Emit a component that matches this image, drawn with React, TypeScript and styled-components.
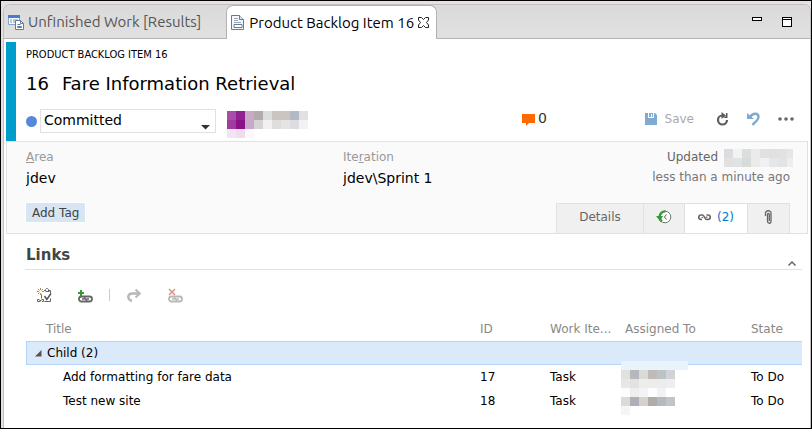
import React from 'react';
import styled, { createGlobalStyle } from 'styled-components';

const GlobalStyle = createGlobalStyle`
  *, *::before, *::after { box-sizing: border-box; }
  body { margin: 0; background: #fff; }
  body, button, input, select {
    font-family: "DejaVu Sans", sans-serif;
    font-size: 12px;
    line-height: 16px;
  }
  button, input, select { margin: 0; padding: 0; border: 0; background: none; color: inherit; }
  h1, h2, p { margin: 0; }
  svg { display: block; flex: none; }
`;

const Frame = styled.div`
  min-height: 100vh;
  border: 1px solid #000;
  background: #e6e0e1;
  padding: 3px 0 0 2px;
  display: flex;
`;

const Editor = styled.div`
  flex: 1;
  min-width: 0;
  background: #fff;
  border: 1px solid #c3bfc0;
  border-bottom: 0;
  border-radius: 7px 7px 0 0;
`;

const TabStrip = styled.div`
  display: flex;
  height: 34px;
  border-radius: 6px 6px 0 0;
  background: linear-gradient(#dadada, #e1e1e1);
  box-shadow: inset 0 -1px #b2b2b2;
`;

const EditorTab = styled.button<{ $active?: boolean }>`
  display: flex;
  align-items: center;
  gap: 4px;
  padding: 0 ${p => (p.$active ? 7 : 25)}px 0 4px;
  font-family: Ubuntu, "Noto Sans", sans-serif;
  font-size: 15px;
  white-space: nowrap;
  color: ${p => (p.$active ? '#000' : '#555')};
  background: ${p => (p.$active ? '#fff' : 'transparent')};
  border: ${p => (p.$active ? '1px solid #b2b2b2' : '0')};
  border-bottom: 0;
  border-radius: 7px 7px 0 0;
`;

const WindowButtons = styled.div`
  display: flex;
  align-items: flex-start;
  gap: 20px;
  margin-left: auto;
  padding: 12px 18px 0 0;
`;

const IconButton = styled.button`
  display: flex;
  align-items: center;
  justify-content: center;
`;

const Form = styled.main`
  padding: 3px 2px 0;
`;

const Header = styled.header`
  border-left: 10px solid #009ccc;
  padding: 5px 14px 8px 10px;
`;

const ItemType = styled.p`
  font-family: "DejaVu Sans Condensed", "DejaVu Sans", sans-serif;
  font-size: 11px;
  color: #000;
`;

const ItemTitle = styled.h1`
  display: flex;
  gap: 13px;
  margin: 9px 0 13px;
  font-family: "DejaVu Sans", sans-serif;
  font-size: 18px;
  font-weight: 400;
  line-height: 24px;
`;

const StatusRow = styled.div`
  display: grid;
  grid-template-columns: 201px 295px 1fr auto;
  align-items: center;
  height: 24px;
`;

const StateField = styled.label`
  display: flex;
  align-items: center;
  gap: 3px;
  margin-right: 11px;
  position: relative;
`;

const StateSelect = styled.select`
  appearance: none;
  flex: 1;
  height: 24px;
  padding: 0 3px 3px;
  border: 1px solid #e1e1e1;
  background: #fff;
  font-size: 14px;
`;

const SelectArrow = styled.svg`
  position: absolute;
  right: 6px;
  bottom: 3px;
  pointer-events: none;
`;

const Assignee = styled.div`
  height: 24px;
  padding-top: 2px;
`;

const CommentsButton = styled.button`
  display: flex;
  align-items: center;
  gap: 3px;
  margin-bottom: 6px;
  font-size: 14px;
  color: #333;
`;

const Actions = styled.div`
  display: flex;
  align-items: center;
  gap: 18px;
  margin-bottom: 5px;
`;

const SaveButton = styled.button`
  display: flex;
  align-items: center;
  gap: 8px;
  margin-right: 4px;
  color: #aaa;
`;

const Details = styled.section`
  border: 1px solid #e1e1e1;
  background: #fafafa;
  padding: 7px 0 0 19px;
`;

const Fields = styled.div`
  display: grid;
  grid-template-columns: 317px 1fr auto;
  padding-right: 14px;
`;

const Field = styled.label`
  display: flex;
  flex-direction: column;
  gap: 4px;
  color: #999;
`;

const FieldInput = styled.input`
  width: 100%;
  color: #000;
  font-size: 14px;
  line-height: 18px;
`;

const Updated = styled.div`
  display: flex;
  flex-direction: column;
  align-items: flex-end;
  gap: 4px;
  color: #666;
  white-space: nowrap;
`;

const UpdatedBy = styled.div`
  display: flex;
  gap: 6px;
  height: 16px;
`;

const Ago = styled.span`
  padding-right: 3px;
  color: #777;
`;

const DetailsFooter = styled.div`
  display: flex;
  justify-content: space-between;
  align-items: flex-start;
  margin-top: 16px;
  padding-right: 17px;
`;

const AddTag = styled.button`
  height: 19px;
  padding: 0 6px;
  background: #d7e6f2;
  box-shadow: 0 0 0 1px #fff;
  color: #444;
`;

const FormTabs = styled.div`
  display: grid;
  grid-template-columns: 87px 41px 63px 42px;
  height: 30px;
  border-left: 1px solid #e1e1e1;
`;

const FormTab = styled.button<{ $active?: boolean }>`
  display: flex;
  align-items: center;
  justify-content: center;
  gap: 6px;
  padding-bottom: 3px;
  border-top: 1px solid #e1e1e1;
  border-right: 1px solid #e1e1e1;
  background: ${p => (p.$active ? '#fff' : '#f0f0f0')};
  color: #666;
`;

const LinkCount = styled.span`
  color: #007acc;
`;

const LinksSection = styled.section`
  padding: 10px 6px 0 19px;
`;

const SectionHead = styled.div`
  display: flex;
  justify-content: space-between;
  align-items: flex-end;
  height: 26px;
  padding: 0 6px 3px 1px;
  border-bottom: 1px solid #e1e1e1;
`;

const SectionTitle = styled.h2`
  font-size: 15px;
  line-height: 22px;
  color: #444;
`;

const Toolbar = styled.div`
  display: flex;
  align-items: center;
  height: 50px;
  gap: 26px;
  padding-left: 12px;
`;

const Separator = styled.span`
  width: 1px;
  height: 12px;
  margin: 0 -9px 0 -10px;
  background: #ccc;
`;

const LinksGrid = styled.div`
  padding-left: 1px;
`;

const LinksTable = styled.table`
  width: 100%;
  table-layout: fixed;
  border-collapse: separate;
  border-spacing: 0;
`;

const Column = styled.col<{ $width?: number }>`
  width: ${p => (p.$width ? `${p.$width}px` : 'auto')};
`;

const Th = styled.th`
  height: 21px;
  padding: 0 0 4px;
  font-weight: 400;
  text-align: left;
  color: #888;
  white-space: nowrap;
  &:first-child { padding-left: 20px; }
`;

const GroupCell = styled.td`
  height: 24px;
  padding: 0 0 0 8px;
  border: 1px solid #b4d3f8;
  border-right: 0;
  background: #dbeafb;
`;

const GroupToggle = styled.button`
  display: flex;
  align-items: center;
  gap: 5px;
`;

const Td = styled.td`
  height: 24px;
  padding: 0;
  position: relative;
  white-space: nowrap;
  &:first-child { padding-left: 37px; }
`;

const CellOverlay = styled.div<{ $top: number }>`
  position: absolute;
  left: -4px;
  top: ${p => p.$top}px;
`;

/* Obscured personal names, drawn as a coarse colour mosaic. */
function Mosaic({ rows, width }: { rows: string[][]; width: number }) {
  return (
    <svg width={width} height={rows.length * 9} shapeRendering="crispEdges" aria-hidden="true">
      {rows.map((row, y) =>
        row.map((c, x) => <rect key={`${x}-${y}`} x={x * 9} y={y * 9} width={9} height={9} fill={c} />),
      )}
    </svg>
  );
}

const assignee = [
  ['#a74fa7', '#90228f', '#c8aac5', '#b1abae', '#dbdedc', '#cac5bf', '#cac5c1', '#b4b9c6', '#e1e1e3'],
  ['#a03ca0', '#8b128a', '#c6a9c8', '#d4d4d4', '#f2f1ef', '#e1dddd', '#e4e4e5', '#dcdde3', '#f2f1f3'],
  ['#f2e5f2', '#efddef', '#fcf7fc'],
];
const updater = [
  ['#dcdce0', '#f1f2f4', '#dcdddd', '#ebebeb', '#e0e1e3', '#e3dedf', '#e0e2e4', '#e5e6e8'],
  ['#e2e0e0', '#e0e3e6', '#d9dbdb', '#ebebea', '#f1f1f1', '#e5e6e7', '#e2e4e4', '#eeeeee'],
];
const owner17 = [
  ['#eaf2fc', '#eaf2fc', '#eaf2fc', '#eaf2fc', '#eaf2fc', '#eaf2fc', '#eaf2fc', '#eaf2fc'],
  ['#e1e2de', '#b7b8be', '#dadbd6', '#c1bbb7', '#bcc3c5', '#d2d3d7'],
  ['#e6e8e7', '#e2e2e2', '#eeedeb', '#edecec', '#ebecee', '#eeeef0'],
];
const owner18 = [
  ['#fcfcfc', '#eeeeee', '#f3f3f3', '#fbfdff', '#f2f2f2'],
  ['#dadbd6', '#aeafb7', '#d3d2cf', '#b2aca7', '#b4bbc0', '#c2c4ca'],
  ['#f3f5f7'],
];

const ResultsIcon = () => (
  <svg width="16" height="16" viewBox="0 0 16 16">
    <path d="M.5 1.5h11v9H.5z" fill="#fff" stroke="#8ba3c8" />
    <path d="M0 1h12v3H0z" fill="#4a7ad0" />
    <path d="M2 6h2M5 6h5M2 8h2M5 8h3" stroke="#7390bd" />
    <path d="M7.500 6.500h5l3 3v6h-8z" fill="#fff" stroke="#637c9c" />
    <path d="M12.500 6.500v3h3M9.500 10.500h3M9.500 12.500h4v1h-4z" fill="none" stroke="#637c9c" />
  </svg>
);
const FormIcon = () => (
  <svg width="14" height="16" viewBox="0 0 14 16">
    <path d="M.5.5h8l4 4v10H.5z" fill="#f5f7fb" stroke="#667b96" />
    <path d="M8.500.5v4h4" fill="#dbe3ef" stroke="#667b96" />
    <path d="M3 3.500h4M3 5.500h4M3 7.500h7" stroke="#9ba8ba" />
    <path d="M3 9.500h8v3H3z" fill="#fff" stroke="#667b96" />
  </svg>
);
const CloseIcon = () => (
  <svg width="11" height="11" viewBox="0 0 11 11">
    <path d="M.5.5h3l2 2 2-2h3v2.500l-2 2.500 2 2.500v2.500h-3l-2-2-2 2h-3V8l2-2.500-2-2.500z" fill="#fff" stroke="#222" />
  </svg>
);
const MinimizeIcon = () => (
  <svg width="10" height="10" shapeRendering="crispEdges"><path d="M.5.5h9v3h-9z" fill="#fff" stroke="#000" /></svg>
);
const MaximizeIcon = () => (
  <svg width="10" height="10" shapeRendering="crispEdges"><path d="M.5.5h9v9h-9zM0 2.500h10" fill="#fff" stroke="#000" /></svg>
);
const CommentIcon = () => (
  <svg width="13" height="16"><path d="M0 4h13v9H7l-3 3v-3H0z" fill="#ff6a00" /></svg>
);
const SaveIcon = () => (
  <svg width="12" height="12"><path d="M0 0h3v5h6V0h1l2 2v10H0zM4 0h4v4H7V1H6v3H4z" fill="#7fabd2" /></svg>
);
const RefreshIcon = () => (
  <svg width="13" height="14" viewBox="0 0 13 14">
    <path d="M7 3.500H6.500A4.500 4.500 0 1 0 11 8" fill="none" stroke="#5c5c5c" strokeWidth="2.200" />
    <path d="M5.500 0 10 3.500 5.500 7zM10 1h1.500v5H7.500L10 4z" fill="#5c5c5c" />
  </svg>
);
const UndoIcon = () => (
  <svg width="13" height="14" viewBox="0 0 13 14">
    <path d="M3 5c3-4.500 8.500-4 8.500 0 0 3-3.500 5-6 8" fill="none" stroke="#7fabd2" strokeWidth="2.400" />
    <path d="M0 1l7 6H0z" fill="#7fabd2" />
  </svg>
);
const MoreIcon = () => (
  <svg width="16" height="4" fill="#666"><circle cx="2" cy="2" r="1.800" /><circle cx="8" cy="2" r="1.800" /><circle cx="14" cy="2" r="1.800" /></svg>
);
const HistoryIcon = () => (
  <svg width="16" height="14" viewBox="0 0 16 14">
    <circle cx="9" cy="7" r="5.800" fill="#fff" stroke="#777" />
    <path d="M9.500 1.400A5.600 5.600 0 0 0 3.600 7c0 2 1 3.500 2.200 4.500" fill="none" stroke="#339933" strokeWidth="2.400" />
    <path d="M0 6h7l-3 5z" fill="#339933" />
    <path d="M10.500 4.500 8.500 7l2 2.500" fill="none" stroke="#555" />
  </svg>
);
const LinkIcon = () => (
  <svg width="13" height="8" viewBox="0 0 13 8" fill="none" stroke="#666" strokeWidth="1.700">
    <path d="M4 6.500H3A2 2 0 0 1 3 2h1.500C6.500 2 6.500 6.500 9 6.500h1A2 2 0 0 0 10 2H8.500" />
    <path d="M3.500 4.500H5M8 4.200h1.500" strokeWidth="1.200" />
  </svg>
);
const ClipIcon = () => (
  <svg width="9" height="15" viewBox="0 0 9 15">
    <path d="M1.500 6V3c0-3 5.500-3 5.500 0v8c0 3-3.500 3-3.500 0V4.500c0-1.500 1.800-1.500 1.800 0V11" fill="none" stroke="#666" strokeWidth="1.300" />
  </svg>
);
const NewLinkedIcon = () => (
  <svg width="15" height="15" viewBox="0 0 15 15" fill="none">
    <path d="M3.500 0v2M3.500 5v2M0 3.500h2M5 3.500h2M1 1l1.500 1.500M6 1 4.500 2.500M1 6l1.500-1.500" stroke="#d0831f" />
    <path d="M7 2.500h1.500M11.500 2.500h2v3M4.500 6.500v4M7.500 13.500h6v-3M8.500 3.500h4M8.500 3V1.500l1-1h1l1 1V3" stroke="#666" />
    <path d="M7.500 8l2.300 3.500L14 5.500" stroke="#555" strokeWidth="1.500" />
    <path d="M2.500 11.500H.5v2h3M4.500 11.500h2v2H5M2.500 12.500h2" stroke="#666" />
  </svg>
);
const BigChain = ({ color }: { color: string }) => (
  <g fill="none" stroke={color}>
    <rect x="1" y="8.500" width="13" height="5" rx="2.500" strokeWidth="1.800" />
    <path d="M4 11h2.500M8.500 11H11M6 9l3 4" strokeWidth="1.400" />
  </g>
);
const AddLinkIcon = () => (
  <svg width="15" height="15" viewBox="0 0 15 15">
    <BigChain color="#666" />
    <path d="M0 5h6M3 2v6" stroke="#339933" strokeWidth="2" />
  </svg>
);
const OpenIcon = () => (
  <svg width="15" height="15" viewBox="0 0 15 15" fill="none" stroke="#b8b8b8">
    <path d="M5 13C-.5 11 .5 5.500 5.500 5.500H12" strokeWidth="2.400" />
    <path d="M8.500 1.500 12.800 5.500 8.500 9.500" strokeWidth="2" />
  </svg>
);
const RemoveLinkIcon = () => (
  <svg width="15" height="15" viewBox="0 0 15 15">
    <BigChain color="#b8b8b8" />
    <path d="M1 1l6 6M7 1 1 7" stroke="#dd9185" strokeWidth="1.500" />
  </svg>
);
const CollapseIcon = () => (
  <svg width="8" height="5"><path d="M.5 4.500 4 1l3.500 3.500" fill="none" stroke="#666" strokeWidth="1.500" /></svg>
);
const TriangleIcon = () => (
  <svg width="7" height="7"><path d="M6.500 0v6.500H0z" fill="#555" /></svg>
);

const links = [
  { title: 'Add formatting for fare data', id: 17, type: 'Task', state: 'To Do', owner: owner17, top: -4, width: 67 },
  { title: 'Test new site', id: 18, type: 'Task', state: 'To Do', owner: owner18, top: -1, width: 54 },
];

export default function App() {
  return (
    <>
      <GlobalStyle />
      <Frame>
        <Editor>
          <TabStrip>
            <EditorTab><ResultsIcon />Unfinished Work [Results]</EditorTab>
            <EditorTab $active><FormIcon />Product Backlog Item 16<CloseIcon /></EditorTab>
            <WindowButtons>
              <IconButton aria-label="Minimize"><MinimizeIcon /></IconButton>
              <IconButton aria-label="Maximize"><MaximizeIcon /></IconButton>
            </WindowButtons>
          </TabStrip>
          <Form>
            <Header>
              <ItemType>PRODUCT BACKLOG ITEM 16</ItemType>
              <ItemTitle><span>16</span><span>Fare Information Retrieval</span></ItemTitle>
              <StatusRow>
                <StateField>
                  <svg width="11" height="11"><circle cx="5.500" cy="5.500" r="5.500" fill="#5688e0" /></svg>
                  <StateSelect aria-label="State" defaultValue="Committed">
                    <option>Committed</option>
                  </StateSelect>
                  <SelectArrow width="9" height="5"><path d="M0 0h9L4.500 4.500z" fill="#333" /></SelectArrow>
                </StateField>
                <Assignee><Mosaic rows={assignee} width={81} /></Assignee>
                <CommentsButton aria-label="Comments"><CommentIcon />0</CommentsButton>
                <Actions>
                  <SaveButton><SaveIcon />Save</SaveButton>
                  <IconButton aria-label="Refresh"><RefreshIcon /></IconButton>
                  <IconButton aria-label="Revert"><UndoIcon /></IconButton>
                  <IconButton aria-label="More actions"><MoreIcon /></IconButton>
                </Actions>
              </StatusRow>
            </Header>
            <Details>
              <Fields>
                <Field><span><u>A</u>rea</span><FieldInput defaultValue="jdev" /></Field>
                <Field><span>Ite<u>r</u>ation</span><FieldInput defaultValue="jdev\Sprint 1" /></Field>
                <Updated>
                  <UpdatedBy>Updated <Mosaic rows={updater} width={69} /></UpdatedBy>
                  <Ago>less than a minute ago</Ago>
                </Updated>
              </Fields>
              <DetailsFooter>
                <AddTag>Add Tag</AddTag>
                <FormTabs>
                  <FormTab>Details</FormTab>
                  <FormTab aria-label="History"><HistoryIcon /></FormTab>
                  <FormTab $active><LinkIcon /><LinkCount>(2)</LinkCount></FormTab>
                  <FormTab aria-label="Attachments"><ClipIcon /></FormTab>
                </FormTabs>
              </DetailsFooter>
            </Details>
            <LinksSection>
              <SectionHead>
                <SectionTitle>Links</SectionTitle>
                <IconButton aria-label="Collapse"><CollapseIcon /></IconButton>
              </SectionHead>
              <Toolbar>
                <IconButton aria-label="New linked work item"><NewLinkedIcon /></IconButton>
                <IconButton aria-label="Add link"><AddLinkIcon /></IconButton>
                <Separator />
                <IconButton aria-label="Open link"><OpenIcon /></IconButton>
                <IconButton aria-label="Remove link"><RemoveLinkIcon /></IconButton>
              </Toolbar>
              <LinksGrid>
                <LinksTable>
                  <colgroup>
                    <Column /><Column $width={70} /><Column $width={75} /><Column $width={126} /><Column $width={51} />
                  </colgroup>
                  <thead>
                    <tr><Th>Title</Th><Th>ID</Th><Th>Work Ite...</Th><Th>Assigned To</Th><Th>State</Th></tr>
                  </thead>
                  <tbody>
                    <tr>
                      <GroupCell colSpan={5}><GroupToggle><TriangleIcon />Child (2)</GroupToggle></GroupCell>
                    </tr>
                    {links.map(l => (
                      <tr key={l.id}>
                        <Td>{l.title}</Td>
                        <Td>{l.id}</Td>
                        <Td>{l.type}</Td>
                        <Td><CellOverlay $top={l.top}><Mosaic rows={l.owner} width={l.width} /></CellOverlay></Td>
                        <Td>{l.state}</Td>
                      </tr>
                    ))}
                  </tbody>
                </LinksTable>
              </LinksGrid>
            </LinksSection>
          </Form>
        </Editor>
      </Frame>
    </>
  );
}
